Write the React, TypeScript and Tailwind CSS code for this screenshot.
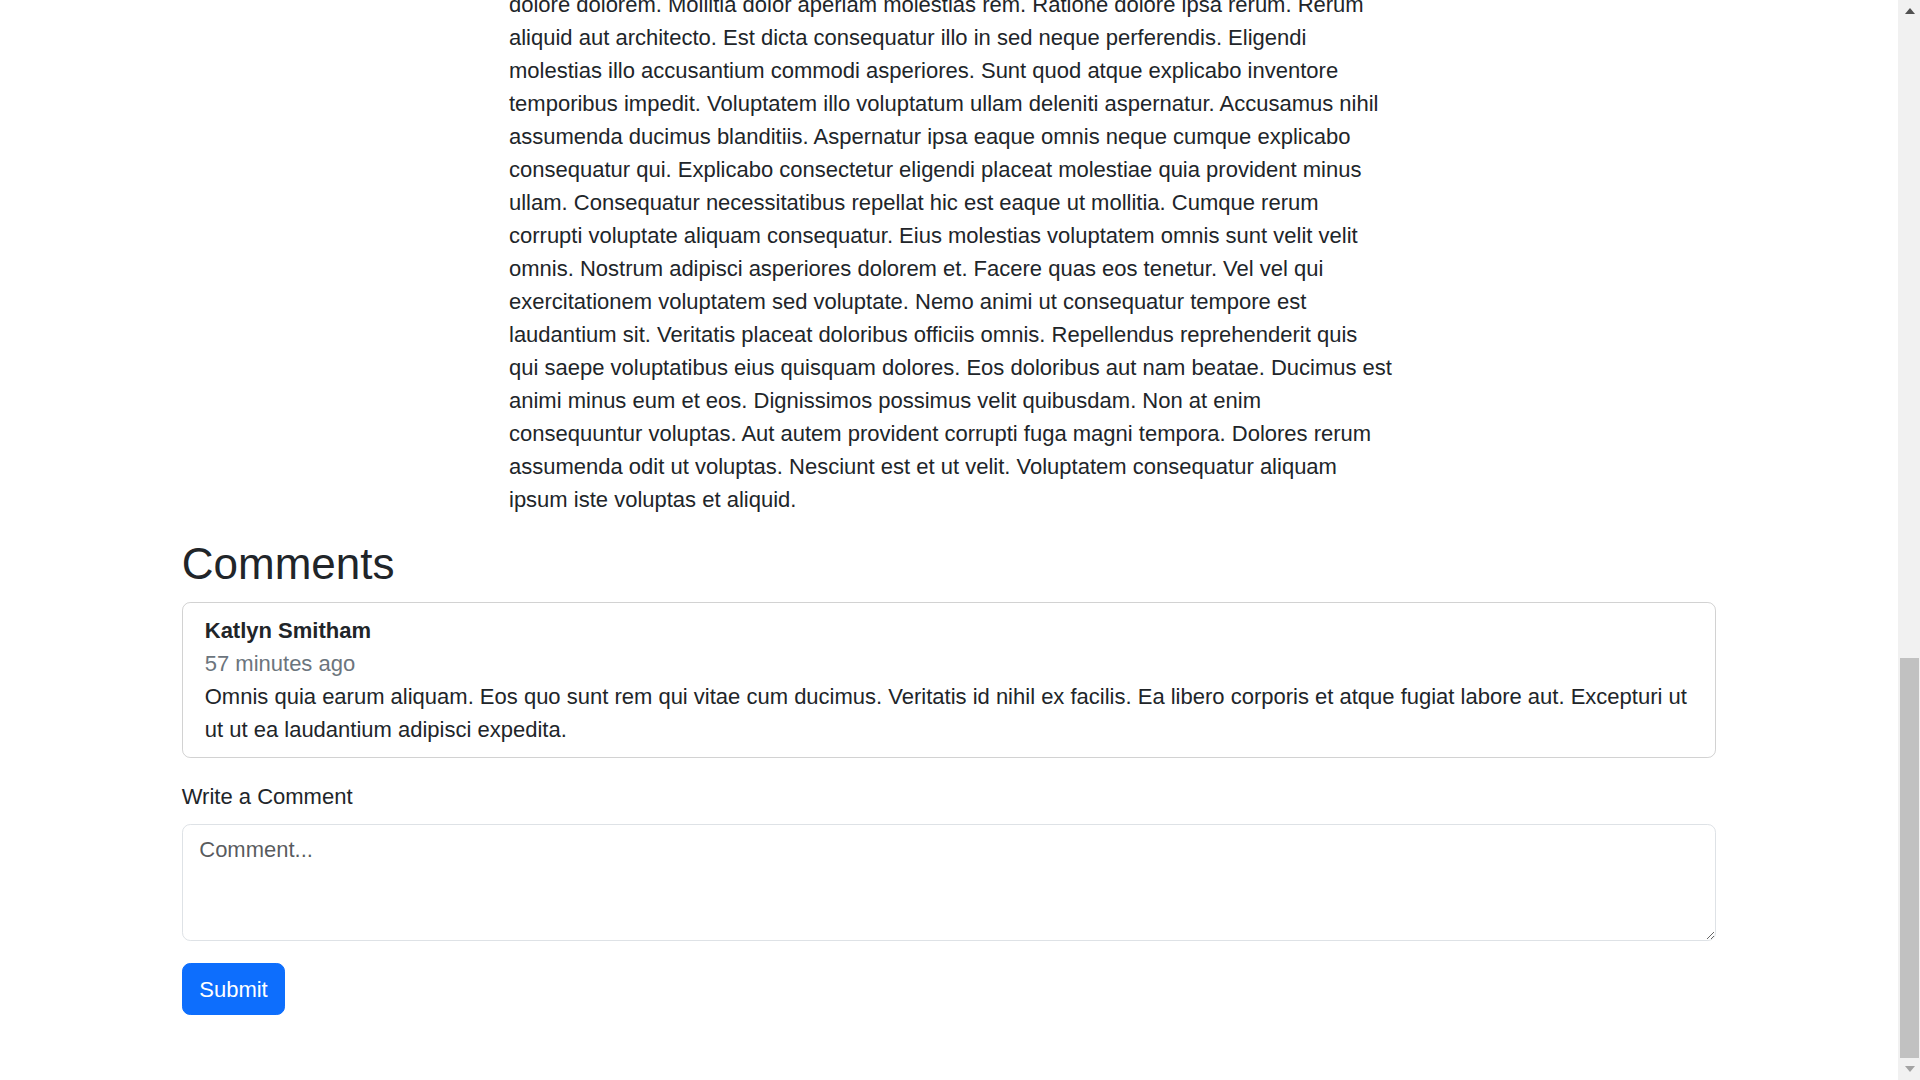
import { useLayoutEffect, useRef, useState } from "react";

const lines = [
  "dolore dolorem. Mollitia dolor aperiam molestias rem. Ratione dolore ipsa rerum. Rerum",
  "aliquid aut architecto. Est dicta consequatur illo in sed neque perferendis. Eligendi",
  "molestias illo accusantium commodi asperiores. Sunt quod atque explicabo inventore",
  "temporibus impedit. Voluptatem illo voluptatum ullam deleniti aspernatur. Accusamus nihil",
  "assumenda ducimus blanditiis. Aspernatur ipsa eaque omnis neque cumque explicabo",
  "consequatur qui. Explicabo consectetur eligendi placeat molestiae quia provident minus",
  "ullam. Consequatur necessitatibus repellat hic est eaque ut mollitia. Cumque rerum",
  "corrupti voluptate aliquam consequatur. Eius molestias voluptatem omnis sunt velit velit",
  "omnis. Nostrum adipisci asperiores dolorem et. Facere quas eos tenetur. Vel vel qui",
  "exercitationem voluptatem sed voluptate. Nemo animi ut consequatur tempore est",
  "laudantium sit. Veritatis placeat doloribus officiis omnis. Repellendus reprehenderit quis",
  "qui saepe voluptatibus eius quisquam dolores. Eos doloribus aut nam beatae. Ducimus est",
  "animi minus eum et eos. Dignissimos possimus velit quibusdam. Non at enim",
  "consequuntur voluptas. Aut autem provident corrupti fuga magni tempora. Dolores rerum",
  "assumenda odit ut voluptas. Nesciunt est et ut velit. Voluptatem consequatur aliquam",
  "ipsum iste voluptas et aliquid.",
];

// earlier part of the article, scrolled out of view
const intro = [
  "Quibusdam voluptatem et quia. Sit dolorem dolorem quo minus quis. Nihil rerum aut quia soluta. Voluptas aut quo iusto voluptatum. Eum dolores vero quo ipsa. Consequatur quia est saepe eos rerum ut. Quia dolorem sunt natus ut. Quaerat impedit similique deserunt ut error. Et illum adipisci nesciunt quae est dolorem. Repudiandae aut aut possimus aut. Tempore et voluptatem molestias vel. Aut dolorem veniam sint dolorem et. Est aut fugit quis repellat. Dolores iste quia et debitis numquam sit.",
  "Enim aut et voluptas quia quo. Qui eos sit similique. Doloribus molestiae ab aperiam. Laudantium maxime harum aut quam. Vitae earum sit reiciendis et. Sint eum sed voluptatem voluptas est. Officiis et corporis aliquid distinctio. Accusantium quas voluptatem iure. Aperiam est repudiandae dolorem nostrum. Ut dolores id iste rerum amet. Dolorum nemo repellendus sit ducimus ad. Sed voluptatem eum quia eum et earum. Vel qui et aliquam vitae quis ad.",
  "Illum quia tempora dolores nisi praesentium. Ullam iure veritatis nihil repellat dolorum. Voluptas facere dolorem sit nisi quas est. Rerum rerum nisi quibusdam aut. Minima qui ut autem. Natus minus omnis sed dolorem deserunt. Eveniet est dolorem quidem atque nesciunt. Aut in et illo qui. Accusamus dolorem iste esse reiciendis. Fugit quia placeat dolores atque laboriosam. Omnis voluptatem molestias aut qui ab. Harum quidem voluptas ut quia nam aperiam.",
  "Sapiente sed quos occaecati. Nam consequatur et quia ipsam. Voluptatibus ut quisquam deleniti est magni. Atque sunt numquam doloremque ut. Adipisci ratione rerum nostrum dolor. Et blanditiis rerum magni est. Consequatur quo voluptatem saepe non vel. Expedita quia natus tempora quis. Sint quos eum voluptas voluptatem. Officia minus eligendi est rerum tenetur. Qui quia dicta et non repellat.",
  "Porro quis officiis ut. Non perspiciatis voluptas dolores est aut. Autem corrupti atque odio nobis. Molestiae reprehenderit dolorem totam voluptates. Ut necessitatibus ex aut non vel. Voluptate facilis ab recusandae fugit quaerat. Ad est illo harum soluta similique. Incidunt eos dolorem qui sint. Voluptas quo qui tenetur ut. Dolores sit veniam aut ut aut. Quam nemo laborum ut est ipsum.",
  "Tempora itaque quia nulla eveniet. Aut dolor sunt ut ipsum molestiae. Quisquam aut libero voluptatem. Deleniti laboriosam dolores dolor et. Minus fuga quod esse cumque sint. Odit voluptatem cum eum accusantium. Cumque molestiae tenetur ut possimus. Rerum similique reiciendis et ea et. Eos voluptas in ut aperiam. Nobis omnis quia dolores sed aut. Quo tempora et eum sunt.",
  "Voluptas rerum quis et modi. Ea dolores voluptatem et repellat. Nihil eum quia ut est. Aliquam dolorum ipsum ut occaecati consequatur. Quia deserunt rerum molestias hic dolor. Facilis vel voluptatem et error. Sunt aut ipsa neque sed. Impedit fugit non omnis voluptatem quae. Harum sint dolorem corrupti veniam ipsam. Ab et quas odit dolores. Est nam iste sed praesentium. Eius ut ut voluptatem est aut. Perferendis nihil repudiandae accusamus quod. Molestias fugiat eos non et consequatur. Rerum sit ea ut ipsum. Quod qui ut est rem ut. Similique quas quae molestiae dolor asperiores. Architecto qui dolorum est.",
];

export default function App() {
  const scroller = useRef<HTMLDivElement>(null);
  const [thumb, setThumb] = useState({ top: 639, height: 397 });

  const measure = () => {
    const el = scroller.current;
    if (!el) return;
    const track = el.clientHeight - 44;
    const height = Math.max(20, (track * el.clientHeight) / el.scrollHeight);
    const max = el.scrollHeight - el.clientHeight;
    const top = max > 0 ? ((track - height) * el.scrollTop) / max : 0;
    setThumb({ top, height });
  };

  useLayoutEffect(() => {
    const el = scroller.current;
    if (el) el.scrollTop = el.scrollHeight;
    measure();
  }, []);

  return (
    <div className="flex h-screen bg-white text-[22px] leading-[33px] text-[#212529] font-['Liberation_Sans',Arial,sans-serif]">
      <div
        ref={scroller}
        onScroll={measure}
        className="flex-1 overflow-y-scroll [scrollbar-width:none]"
      >
        <main className="mx-auto w-full max-w-[1567.5px] px-[16.5px] pt-[66px] pb-[65px]">
          <article className="mx-auto max-w-[880px]">
            <h1 className="mb-[11px] text-[55px] font-medium leading-[66px]">
              Et ratione illo aut
            </h1>
            <p className="mb-[22px] text-[#6c757d]">Posted 3 hours ago by Delia Kuhn</p>
            {intro.map((p, i) => (
              <p key={i} className="mb-[22px]">
                {p}
              </p>
            ))}
            <p className="mb-[22px]">
              {lines.map((l, i) => (
                <span key={i} className="block whitespace-nowrap">
                  {l}
                </span>
              ))}
            </p>
          </article>

          <section>
            <h2 className="mb-[11px] text-[44px] font-medium leading-[52.8px]">Comments</h2>

            <div className="mb-[22px] rounded-[8.25px] border border-[rgba(0,0,0,0.175)] px-[22px] py-[11px]">
              <p className="font-bold">Katlyn Smitham</p>
              <p className="text-[#6c757d]">57 minutes ago</p>
              <p>
                Omnis quia earum aliquam. Eos quo sunt rem qui vitae cum ducimus. Veritatis id
                nihil ex facilis. Ea libero corporis et atque fugiat labore aut. Excepturi ut ut
                ut ea laudantium adipisci expedita.
              </p>
            </div>

            <form onSubmit={(e) => e.preventDefault()}>
              <label htmlFor="comment" className="mb-[11px] block">
                Write a Comment
              </label>
              <textarea
                id="comment"
                rows={3}
                placeholder="Comment..."
                className="mb-[22px] block w-full rounded-[8.25px] border border-[#dee2e6] bg-white px-[16.5px] py-[8.25px] leading-[33px] text-[#212529] outline-none placeholder:text-[rgba(33,37,41,0.75)]"
              />
              <button
                type="submit"
                className="rounded-[8.25px] border border-[#0d6efd] bg-[#0d6efd] px-[16.5px] py-[8.25px] leading-[33px] text-white"
              >
                Submit
              </button>
            </form>
          </section>
        </main>
      </div>

      {/* window scrollbar */}
      <div className="flex w-[22px] shrink-0 flex-col bg-[#f1f1f1]">
        <div className="flex h-[22px] items-center justify-center pl-[2px]">
          <div className="h-0 w-0 border-x-[5.5px] border-b-[6px] border-x-transparent border-b-[#505050]" />
        </div>
        <div className="relative flex-1">
          <div
            className="absolute right-[1px] left-[2px] bg-[#c1c1c1]"
            style={{ top: thumb.top, height: thumb.height }}
          />
        </div>
        <div className="flex h-[22px] items-center justify-center pl-[2px]">
          <div className="h-0 w-0 border-x-[5.5px] border-t-[6px] border-x-transparent border-t-[#a3a3a3]" />
        </div>
      </div>
    </div>
  );
}
